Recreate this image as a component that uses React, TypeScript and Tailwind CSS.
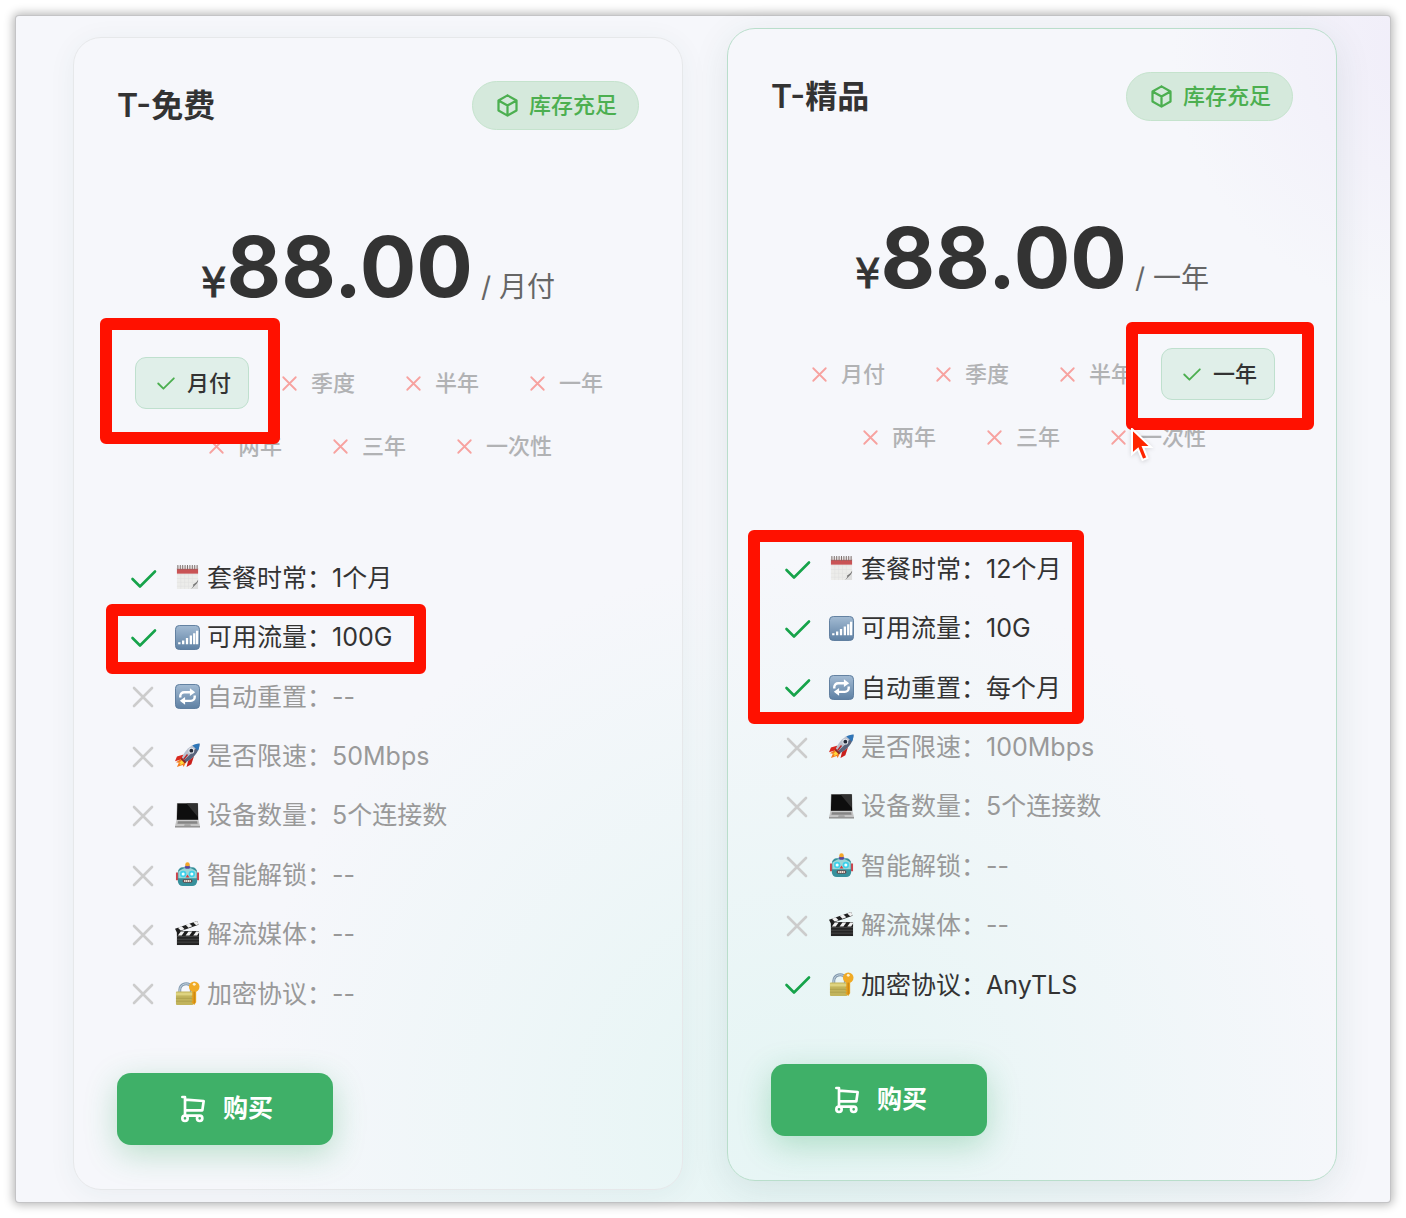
import type { ReactNode } from "react";

type IconProps = { d: string; className: string; strokeWidth?: string };

function LineIcon({ d, className, strokeWidth = "2" }: IconProps) {
  return (
    <svg viewBox="0 0 24 24" fill="none" stroke="currentColor" strokeWidth={strokeWidth} strokeLinecap="round" strokeLinejoin="round" className={className} aria-hidden="true">
      <path d={d} />
    </svg>
  );
}

const CHECK = "M5 12l5 5l10 -10";
const CROSS = "M18 6L6 18M6 6l12 12";
const BOX = "M12 3l8 4.5v9l-8 4.5l-8 -4.5v-9l8 -4.5M12 12l8 -4.5M12 12v9M12 12l-8 -4.5";
const CART = "M4 19a2 2 0 1 0 4 0a2 2 0 1 0 -4 0M15 19a2 2 0 1 0 4 0a2 2 0 1 0 -4 0M17 17h-11v-14h-2M6 5l14 1l-1 7h-13";

type EmojiName = "calendar" | "signal" | "repeat" | "rocket" | "laptop" | "robot" | "clapper" | "lock";

const emojiArt: Record<EmojiName, ReactNode> = {
  calendar: (
    <>
      <path d="M2 3h22v14l-7 8H2z" fill="#ececea" />
      <path d="M2 10h22M2 14h22M2 18h20M2 22h17M6 8v17M10 8v17M14 8v17M18 8v14" stroke="#e0e0e0" strokeWidth=".6" />
      <path d="M2 3h22v6H2z" fill="#c95355" />
      <path d="M2 1h22v3H2z" fill="#eceaea" />
      <path d="M3 0v5M5.500 0v5M8 0v5M10.500 0v5M13 0v5M15.500 0v5M18 0v5M20.500 0v5M23 0v5" stroke="#7b6c6a" strokeWidth="1" />
      <path d="M24 15v2c-1 4-4 7-8 8c3-2 3-3 3-5c2-1 4-2 5-5z" fill="#777" />
      <path d="M24 18v7h-7z" fill="#dedede" />
    </>
  ),
  signal: (
    <>
      <rect x=".5" y=".5" width="25" height="25" rx="4" fill="url(#blueKey)" stroke="#5d7c9d" />
      <path d="M4.500 20v-2M8.500 20v-4M12.500 20v-6.500M16.500 20V11M20 20V8.500M23 20V6" stroke="#fff" strokeWidth="2.400" />
    </>
  ),
  repeat: (
    <>
      <rect x=".5" y=".5" width="25" height="25" rx="4" fill="url(#blueKey)" stroke="#5d7c9d" />
      <path d="M5.500 14v-1.500a4 4 0 0 1 4-4H16M20.500 12v1.500a4 4 0 0 1-4 4H10" fill="none" stroke="#fff" strokeWidth="2.500" />
      <path d="M15.500 4.500l5.500 4l-5.500 4zM10.500 13.500l-5.500 4l5.500 4z" fill="#fff" />
    </>
  ),
  rocket: (
    <>
      <path d="M9 12L2 14L0 19L7 17z" fill="#d9281e" />
      <path d="M14 17l-2 8l5-3l3-9z" fill="#c9201c" />
      <path d="M7 16l-6 4l3 .5L2 25l6-2l1 2l3-6z" fill="#f47b20" />
      <path d="M8 17l-4 4l2 0l-1 2.500l5-3z" fill="#ffd83b" />
      <path d="M7 16C10 8 15 2 25.500 .5C25 10 19 16 11 20z" fill="#b9c0cd" />
      <path d="M9 18C14 14 20 8 25.500 .5C25 10 19 16 11 20z" fill="#59647c" />
      <path d="M18 2.500c2-1 4-1.700 7.500-2c0 3-.5 5-1.500 7.500z" fill="#2f76b8" />
      <path d="M7 15l5 5l-2 1l-4-4z" fill="#8e2825" />
      <circle cx="17" cy="8" r="3" fill="#e3e7ee" />
      <circle cx="17" cy="8" r="2" fill="#242a39" />
      <path d="M13 12l-4 5" stroke="#b72323" strokeWidth="1.500" />
    </>
  ),
  laptop: (
    <>
      <path d="M2 0h22l.5 18h-23z" fill="#a6a6a6" />
      <path d="M2.500 .5h21l.5 17H2z" fill="#0e0e0e" />
      <path d="M12 .5h11.500l.3 14z" fill="#303030" />
      <path d="M1.500 18h23l1.500 6H0z" fill="#c4c4c4" />
      <path d="M3 19h20l.5 2.500h-21z" fill="#858585" />
      <path d="M10 22h6l.5 2h-7z" fill="#a2a2a2" />
      <path d="M0 24h26v1.500H0z" fill="#8d8d8d" />
    </>
  ),
  robot: (
    <>
      <path d="M13 3v4" stroke="#594aa0" strokeWidth="4" />
      <circle cx="13" cy="2.500" r="2.300" fill="#f5a728" />
      <path d="M1 11h3v8H1zM22 11h3v8h-3z" fill="#d0444c" />
      <rect x="3" y="5.500" width="20" height="19.500" rx="5" fill="#37909b" />
      <path d="M3.500 10q9.500-8 19 0v7h-19z" fill="#9ad6d8" />
      <path d="M10 4.500h6l-1 2.500h-4z" fill="#59479c" />
      <circle cx="8.500" cy="12.500" r="3.300" fill="#3ed0ea" />
      <circle cx="17.500" cy="12.500" r="3.300" fill="#3ed0ea" />
      <circle cx="8.500" cy="12.500" r="1.600" fill="#efffff" />
      <circle cx="17.500" cy="12.500" r="1.600" fill="#efffff" />
      <path d="M13 13l2 3h-4z" fill="#d63a3c" />
      <rect x="8" y="18" width="10" height="3.500" rx="1.500" fill="#654b4e" />
      <path d="M9.500 19.700h7" stroke="#f1e4d8" strokeWidth="2" strokeDasharray="1.500 .5" />
    </>
  ),
  clapper: (
    <>
      <path d="M2 10.500h23V25H2z" fill="#242424" />
      <path d="M2 16h23M2 19h23M2 22h23" stroke="#555" strokeWidth=".7" />
      <path d="M0 8L23 0l1.500 4L2 12z" fill="#202020" />
      <path d="M3 7l3 3l4-1.500l-3-3zM11 4l3 3l4-1.500l-3-3zM19 1.500l3 3l2.500-1L23 0z" fill="#f1f1f1" />
      <path d="M2 11h23v4H2z" fill="#1c1c1c" />
      <path d="M6 11h4l-3 4H3zM14 11h4l-3 4h-4zM22 11h3v1l-2 3h-4z" fill="#f1f1f1" />
    </>
  ),
  lock: (
    <>
      <path d="M5 12V9a6.500 6.500 0 0 1 12-3v6" fill="none" stroke="#8198ad" strokeWidth="3" />
      <path d="M5 12V9a6.500 6.500 0 0 1 12-3v6" fill="none" stroke="#c9d7e2" strokeWidth="1" />
      <rect x="1" y="11" width="18" height="14" rx="1" fill="#c2b45c" />
      <path d="M1 12h18v3H1z" fill="#ded37f" />
      <path d="M1 18h18M1 21h18" stroke="#a99b49" strokeWidth=".8" />
      <path d="M18 9h4v13l-2 3l-3-3l1.500-1.500L17 19l1.500-1.500L17 16l1-1z" fill="#e6a01c" />
      <circle cx="20" cy="6" r="5.500" fill="#f0aa25" />
      <path d="M20 11v12" stroke="#b97712" strokeWidth=".8" />
      <circle cx="20" cy="3.500" r="1.500" fill="#fff3d2" />
    </>
  ),
};

function Emoji({ name }: { name: EmojiName }) {
  return (
    <svg viewBox="0 0 26 26" className="mr-[7px] mb-0.5 size-[25px] shrink-0" aria-hidden="true">
      <defs>
        <linearGradient id="blueKey" x1="0" y1="0" x2="0" y2="1">
          <stop offset="0" stopColor="#a3bbd3" />
          <stop offset="1" stopColor="#5e80a3" />
        </linearGradient>
      </defs>
      {emojiArt[name]}
    </svg>
  );
}

function Marker({ className }: { className: string }) {
  return (
    <span className={`pointer-events-none absolute z-10 ${className}`}>
      <span className="block h-full w-full rounded-md border-12 border-[#ff1100]" />
    </span>
  );
}

function Pointer() {
  return (
    <svg viewBox="0 0 24 34" className="pointer-events-none absolute top-[16px] left-[41px] z-20 h-[34px] w-[24px] drop-shadow-sm" aria-hidden="true">
      <path d="M2 1v25l6-5l4.500 11l5-2l-4.500-11h8z" fill="#ff2600" stroke="#fff" strokeWidth="2" />
    </svg>
  );
}

const periods = ["月付", "季度", "半年", "一年", "两年", "三年", "一次性"];

const labels: { icon: EmojiName; label: string }[] = [
  { icon: "calendar", label: "套餐时常" },
  { icon: "signal", label: "可用流量" },
  { icon: "repeat", label: "自动重置" },
  { icon: "rocket", label: "是否限速" },
  { icon: "laptop", label: "设备数量" },
  { icon: "robot", label: "智能解锁" },
  { icon: "clapper", label: "解流媒体" },
  { icon: "lock", label: "加密协议" },
];

type Plan = {
  name: string;
  period: string;
  values: string[];
  included: number[];
  lifted: boolean;
};

const plans: Plan[] = [
  { name: "T-免费", period: "月付", values: ["1个月", "100G", "--", "50Mbps", "5个连接数", "--", "--", "--"], included: [0, 1], lifted: false },
  { name: "T-精品", period: "一年", values: ["12个月", "10G", "每个月", "100Mbps", "5个连接数", "--", "--", "AnyTLS"], included: [0, 1, 2, 7], lifted: true },
];

function PlanCard({ plan }: { plan: Plan }) {
  return (
    <article
      className={`rounded-[28px] border p-[43px] pb-[44px] ${
        plan.lifted
          ? "-mt-[9px] border-[#b9decb] shadow-[0_8px_36px_rgba(40,80,80,0.10)]"
          : "border-[#e6e8ea] shadow-[0_4px_28px_rgba(40,80,80,0.06)]"
      }`}
    >
      <header className="flex items-center justify-between">
        <h2 className="text-[32px] leading-[48px] font-semibold">{plan.name}</h2>
        <span className="flex h-[49px] items-center gap-2 rounded-full border border-[#c5e3cd] bg-[#d5e9dc] px-[21px] text-[22px] font-medium text-[#4caf50]">
          <LineIcon d={BOX} className="size-[27px]" />
          库存充足
        </span>
      </header>

      <p className="mt-[94px] flex h-[86px] items-baseline justify-center leading-none whitespace-nowrap">
        <span className="font-['DejaVu_Sans',sans-serif] text-[40px] leading-none [-webkit-text-stroke:1px_#333]">¥</span>
        <span className="text-[84px] leading-[86px] font-bold">88.00</span>
        <span className="ml-2 text-[28px] leading-none text-[#666]">/ {plan.period}</span>
      </p>

      <div className="mt-[47px] flex flex-wrap justify-center gap-x-[10px] gap-y-[11px]">
        {periods.map((period) => {
          const active = period === plan.period;
          return (
            <button
              key={period}
              type="button"
              disabled={!active}
              className={`relative flex h-[52px] items-center gap-[9px] rounded-[11px] border px-[17px] text-[22px] font-medium ${
                active ? "border-[#bfe0ce] bg-[#e0efe9]" : "border-transparent text-[#b1b2b4]"
              }`}
            >
              <LineIcon d={active ? CHECK : CROSS} strokeWidth="1.75" className={active ? "size-[25px] text-[#4caf50]" : "size-[25px] text-[#f7a29f]"} />
              {period}
              {active && (
                <Marker className={plan.lifted ? "-top-[27px] -right-[40px] -bottom-[31px] -left-[36px]" : "-top-[40px] -right-[32px] -bottom-[36px] -left-[36px]"} />
              )}
              {plan.lifted && period === "一次性" && <Pointer />}
            </button>
          );
        })}
      </div>

      <ul className="relative mt-[77px] grid h-[475px] grid-rows-8 pl-2">
        {labels.map(({ icon, label }, i) => {
          const on = plan.included.includes(i);
          return (
            <li key={label} className={`flex items-center text-[25px] whitespace-nowrap ${on ? "" : "text-[#999]"}`}>
              <LineIcon d={on ? CHECK : CROSS} strokeWidth="1.75" className={on ? "mr-[14px] size-[36px] text-[#16a34a]" : "mr-[14px] size-[36px] text-[#cccccc]"} />
              <Emoji name={icon} />
              <span>
                {label}：{plan.values[i]}
              </span>
            </li>
          );
        })}
        <Marker className={plan.lifted ? "-top-[10px] -left-[23px] h-[194px] w-[336px]" : "top-[55px] -left-[11px] h-[70px] w-[320px]"} />
      </ul>

      <button
        type="button"
        className="mt-[49px] flex h-[72px] w-[216px] items-center justify-center gap-[14px] rounded-[14px] bg-[#3fb068] text-[25px] font-semibold text-white shadow-[0_9px_32px_rgba(34,163,84,0.28)]"
      >
        <LineIcon d={CART} className="size-[32px]" />
        购买
      </button>
    </article>
  );
}

export default function App() {
  return (
    <div className="bg-white p-4 font-[Inter,'Noto_Sans_CJK_SC',sans-serif] text-[#333]">
      <main className="grid grid-cols-2 items-start gap-[44px] rounded-[3px] bg-[#f6f7fb] bg-[radial-gradient(circle_at_103%_3%,#f0edf9_0,transparent_260px),radial-gradient(circle_at_57%_93%,#e5f5f4_0,transparent_560px)] pt-[21px] pr-[53px] pb-[12px] pl-[57px] shadow-[0_0_0_1px_#c4c4c6,0_0_10px_3px_rgba(0,0,0,0.28)]">
        {plans.map((plan) => (
          <PlanCard key={plan.name} plan={plan} />
        ))}
      </main>
    </div>
  );
}
